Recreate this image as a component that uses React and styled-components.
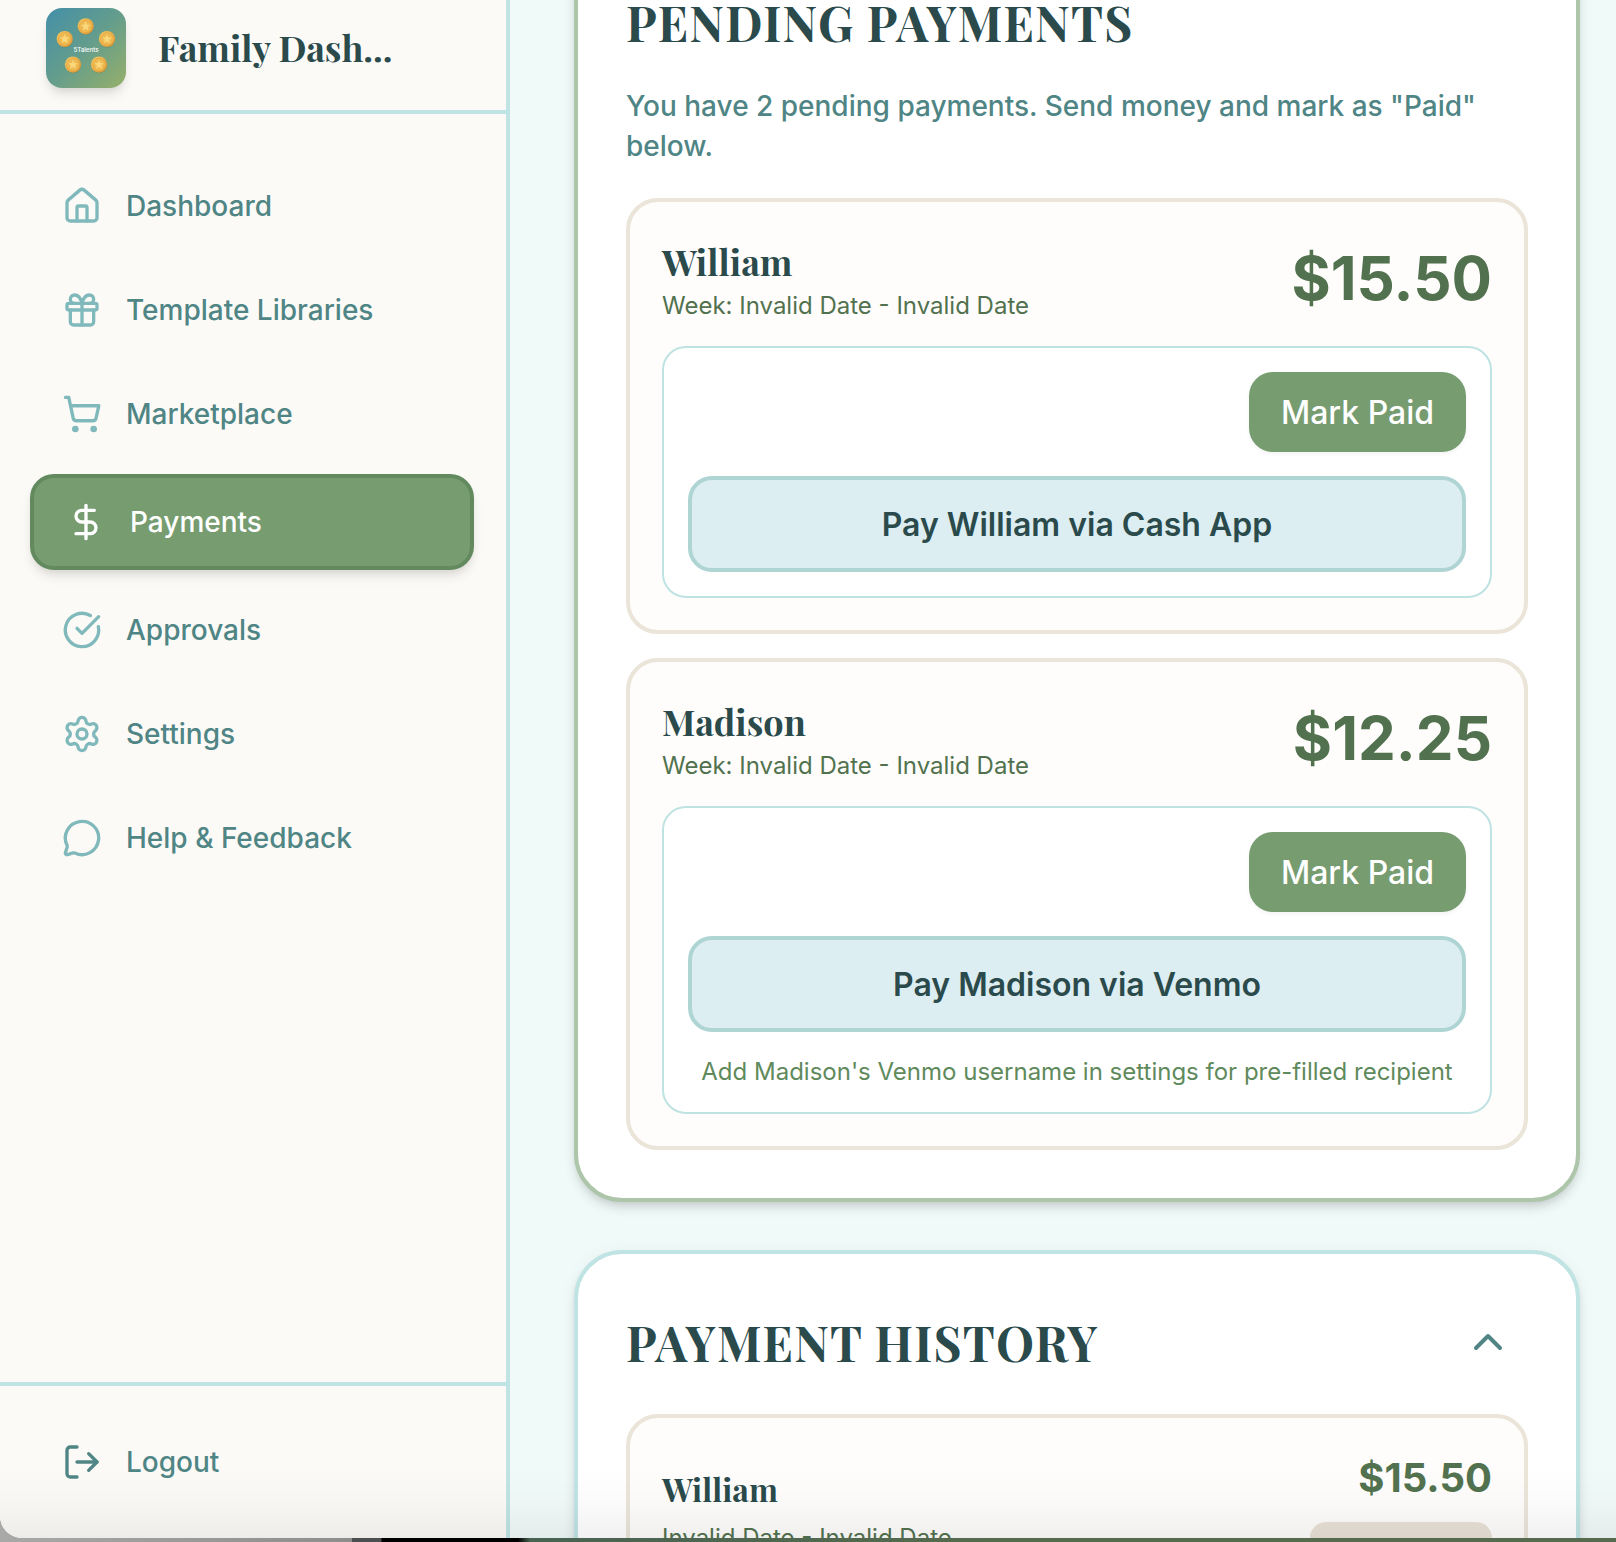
import React from 'react'
import styled, { createGlobalStyle, css } from 'styled-components'
import {
    House,
    Gift,
    ShoppingCart,
    DollarSign,
    CircleCheckBig,
    Settings,
    MessageCircle,
    LogOut,
    ChevronUp
} from 'lucide-react'


const GlobalStyle = createGlobalStyle`
*, *::before, *::after{
    box-sizing: border-box;
}
body{
    margin: 0;
    overflow: hidden;
    font-family: Inter, "Liberation Sans", sans-serif;
    -webkit-font-smoothing: antialiased;
}
h1, h2, h3, p{
    margin: 0;
}
button{
    font-family: inherit;
    cursor: pointer;
}
`

const serif = css`
font-family: "Playfair Display", "Liberation Serif", serif;
font-weight: 700;
color: #2a4a4c;
white-space: nowrap;
`

const Desktop = styled.div`
width: 1616px;
height: 1542px;
overflow: hidden;
background: linear-gradient(90deg, #a9a9a7 0, #8d8d8b 352px, #4c4f4f 352px, #4c4f4f 381px, #000 382px, #000 518px, #486352 530px, #566b4e 1000px, #566b4e 100%);
`

const Window = styled.div`
position: relative;
height: 1538px;
display: flex;
overflow: hidden;
border-bottom-left-radius: 22px;
background-color: #f0faf8;

/* soft shade along the bottom edge */
&::after{
    content: '';
    position: absolute;
    left: 0;
    right: 0;
    bottom: 0;
    height: 70px;
    pointer-events: none;
    background: linear-gradient(180deg, rgba(0, 0, 0, 0) 0%, rgba(0, 0, 0, 0.016) 50%, rgba(0, 0, 0, 0.055) 100%);
}
`

const Sidebar = styled.aside`
width: 510px;
flex-shrink: 0;
display: flex;
flex-direction: column;
background-color: #fcfaf6;
border-right: 4px solid #c0e3e3;
`

const Brand = styled.div`
height: 114px;
padding: 8px 32px 22px 46px;
display: flex;
align-items: center;
gap: 32px;
border-bottom: 4px solid #c0e3e3;
`

const LogoBox = styled.div`
width: 80px;
height: 80px;
flex-shrink: 0;
border-radius: 16px;
overflow: hidden;
box-shadow: 0 8px 12px -2px rgba(0, 0, 0, 0.1), 0 4px 8px -4px rgba(0, 0, 0, 0.1);

svg{
    display: block;
}
`

const BrandName = styled.h1`
${serif}
padding-bottom: 2px;
font-size: 36px;
line-height: 56px;
`

const Nav = styled.nav`
flex: 1;
padding: 48px 32px 0 30px;
display: flex;
flex-direction: column;
gap: 16px;
`

const NavItem = styled.a`
display: flex;
align-items: center;
gap: 24px;
padding: 24px 32px;
border-radius: 24px;
font-size: 28px;
line-height: 40px;
font-weight: 500;
color: #4f8585;

svg{
    color: ${props => props.$muted ? '#80b9bb' : 'inherit'};
}

${props => props.$active && css`
    color: #fff;
    background-color: #769c70;
    border: 4px solid #638a5f;
    box-shadow: 0 8px 12px -2px rgba(0, 0, 0, 0.1), 0 4px 8px -4px rgba(0, 0, 0, 0.1);

    svg{
        color: #fff;
    }
`}
`

const SidebarFooter = styled.div`
padding: 32px 32px 32px 30px;
border-top: 4px solid #c0e3e3;
`

const Main = styled.main`
flex: 1;
padding: 0 36px 0 64px;
display: flex;
flex-direction: column;
gap: 48px;
overflow: hidden;
`

const Card = styled.section`
flex-shrink: 0;
padding: 48px;
border: 4px solid ${props => props.$tone === 'green' ? '#adc5a9' : '#c0e3e3'};
border-radius: 48px;
background-color: #fff;
box-shadow: 0 8px 12px -2px rgba(0, 0, 0, 0.1), 0 4px 8px -4px rgba(0, 0, 0, 0.1), 0 2px 16px rgba(0, 0, 0, 0.05);

/* the page is scrolled, so the first card starts above the fold */
&:first-child{
    margin-top: -60px;
}
`

const CardTitle = styled.h2`
${serif}
font-size: 48px;
line-height: 60px;
letter-spacing: 1.2px;
text-transform: uppercase;
`

const Intro = styled.p`
margin: 34px 0 32px;
font-size: 28px;
line-height: 40px;
font-weight: 500;
color: #4f8585;
`

const List = styled.div`
display: flex;
flex-direction: column;
gap: 24px;
`

const Entry = styled.article`
padding: 32px;
border: 4px solid #eae4d9;
border-radius: 32px;
background-color: #fefdfb;
`

const EntryHead = styled.div`
display: flex;
justify-content: space-between;
align-items: center;
margin-bottom: 24px;
`

const Name = styled.h3`
${serif}
padding-bottom: 2px;
font-size: ${props => props.$small ? '32px' : '36px'};
line-height: 54px;
`

const Period = styled.p`
font-size: 24px;
line-height: 32px;
color: #52724f;
white-space: nowrap;
`

const Amount = styled.span`
font-size: ${props => props.$small ? '40px' : '60px'};
line-height: ${props => props.$small ? '56px' : '72px'};
font-weight: 700;
color: #52724f;
`

const Actions = styled.div`
display: flex;
flex-direction: column;
gap: 24px;
padding: 24px;
border: 2px solid #bfe2e3;
border-radius: 24px;
background-color: #fff;
`

const MarkPaid = styled.button`
align-self: flex-end;
width: 217px;
height: 80px;
padding: 0;
border: none;
border-radius: 24px;
background-color: #769c70;
box-shadow: 0 2px 4px rgba(0, 0, 0, 0.05);
color: #fff;
font-size: 32px;
font-weight: 500;
`

const PayButton = styled.button`
height: 96px;
padding: 0;
border: 4px solid #aed4d4;
border-radius: 24px;
background-color: #dceef2;
color: #2a4a4c;
font-size: 32px;
font-weight: 600;
`

const Hint = styled.p`
font-size: 24px;
line-height: 32px;
text-align: center;
white-space: nowrap;
color: #5f8a5c;
`

const HistoryHead = styled.div`
display: flex;
justify-content: space-between;
align-items: center;
height: 80px;
margin-bottom: 32px;
`

const Toggle = styled.button`
display: flex;
padding: 16px;
border: none;
background: none;
color: #4f8585;
`

const HistoryRow = styled.div`
display: flex;
justify-content: space-between;
align-items: flex-start;
`

const HistoryWho = styled.div`
display: flex;
flex-direction: column;
gap: 4px;
padding-top: 12px;
`

const HistorySum = styled.div`
display: flex;
flex-direction: column;
align-items: flex-end;
gap: 16px;
`

const Status = styled.span`
width: 182px;
height: 56px;
border-radius: 16px;
background-color: #e9e1d6;
`


const coins = [
    [39.7, 18.3],
    [18.7, 31],
    [61, 31],
    [27, 56.6],
    [53, 56.6]
]

const Logo = () => (
    <LogoBox>
        <svg width="80" height="80" viewBox="0 0 80 80">
            <defs>
                <linearGradient id="sky" x1="0" y1="0" x2="1" y2="1">
                    <stop offset="0" stopColor="#438fa9" />
                    <stop offset="0.5" stopColor="#659d8c" />
                    <stop offset="1" stopColor="#96b069" />
                </linearGradient>
                <linearGradient id="gold" x1="0" y1="0" x2="1" y2="1">
                    <stop offset="0" stopColor="#f6d067" />
                    <stop offset="1" stopColor="#dd8f2c" />
                </linearGradient>
            </defs>
            <rect width="80" height="80" fill="url(#sky)" />
            {coins.map(([x, y]) => (
                <g key={`${x}-${y}`} transform={`translate(${x} ${y})`}>
                    <circle cy="0.6" r="8.2" fill="#4d7a68" opacity="0.35" />
                    <circle r="8.1" fill="url(#gold)" />
                    <circle r="6.4" fill="#efb952" stroke="#e0a243" strokeWidth="0.6" />
                    <path d="M0 -4.8 1.4 -1.7 4.7 -1.4 2.2 0.8 3 4.1 0 2.4 -3 4.1 -2.2 0.8 -4.7 -1.4 -1.4 -1.7Z" fill="#f9d77a" />
                </g>
            ))}
            <text x="40" y="43.7" textAnchor="middle" fontSize="6.2" fontWeight="500" fill="#fff" fontFamily="Inter, sans-serif">5Talents</text>
        </svg>
    </LogoBox>
)

const links = [
    { label: 'Dashboard', icon: House },
    { label: 'Template Libraries', icon: Gift },
    { label: 'Marketplace', icon: ShoppingCart },
    { label: 'Payments', icon: DollarSign, active: true },
    { label: 'Approvals', icon: CircleCheckBig },
    { label: 'Settings', icon: Settings },
    { label: 'Help & Feedback', icon: MessageCircle }
]

const pending = [
    { name: 'William', amount: '$15.50', via: 'Cash App' },
    { name: 'Madison', amount: '$12.25', via: 'Venmo', hint: "Add Madison's Venmo username in settings for pre-filled recipient" }
]


const App = () => {

    return (
        <Desktop>
            <GlobalStyle />
            <Window>
                <Sidebar>
                    <Brand>
                        <Logo />
                        <BrandName>Family Dash...</BrandName>
                    </Brand>
                    <Nav>
                        {links.map(({ label, icon: Icon, active }) => (
                            <NavItem key={label} $active={active} $muted>
                                <Icon size={40} />
                                {label}
                            </NavItem>
                        ))}
                    </Nav>
                    <SidebarFooter>
                        <NavItem>
                            <LogOut size={40} />
                            Logout
                        </NavItem>
                    </SidebarFooter>
                </Sidebar>
                <Main>
                    <Card $tone="green">
                        <CardTitle>Pending Payments</CardTitle>
                        <Intro>You have 2 pending payments. Send money and mark as "Paid" below.</Intro>
                        <List>
                            {pending.map(item => (
                                <Entry key={item.name}>
                                    <EntryHead>
                                        <div>
                                            <Name>{item.name}</Name>
                                            <Period>Week: Invalid Date - Invalid Date</Period>
                                        </div>
                                        <Amount>{item.amount}</Amount>
                                    </EntryHead>
                                    <Actions>
                                        <MarkPaid>Mark Paid</MarkPaid>
                                        <PayButton>Pay {item.name} via {item.via}</PayButton>
                                        {item.hint && <Hint>{item.hint}</Hint>}
                                    </Actions>
                                </Entry>
                            ))}
                        </List>
                    </Card>
                    <Card>
                        <HistoryHead>
                            <CardTitle>Payment History</CardTitle>
                            <Toggle>
                                <ChevronUp size={48} />
                            </Toggle>
                        </HistoryHead>
                        <Entry>
                            <HistoryRow>
                                <HistoryWho>
                                    <Name $small>William</Name>
                                    <Period>Invalid Date - Invalid Date</Period>
                                </HistoryWho>
                                <HistorySum>
                                    <Amount $small>$15.50</Amount>
                                    <Status />
                                </HistorySum>
                            </HistoryRow>
                        </Entry>
                    </Card>
                </Main>
            </Window>
        </Desktop>
    )
}

export default App
